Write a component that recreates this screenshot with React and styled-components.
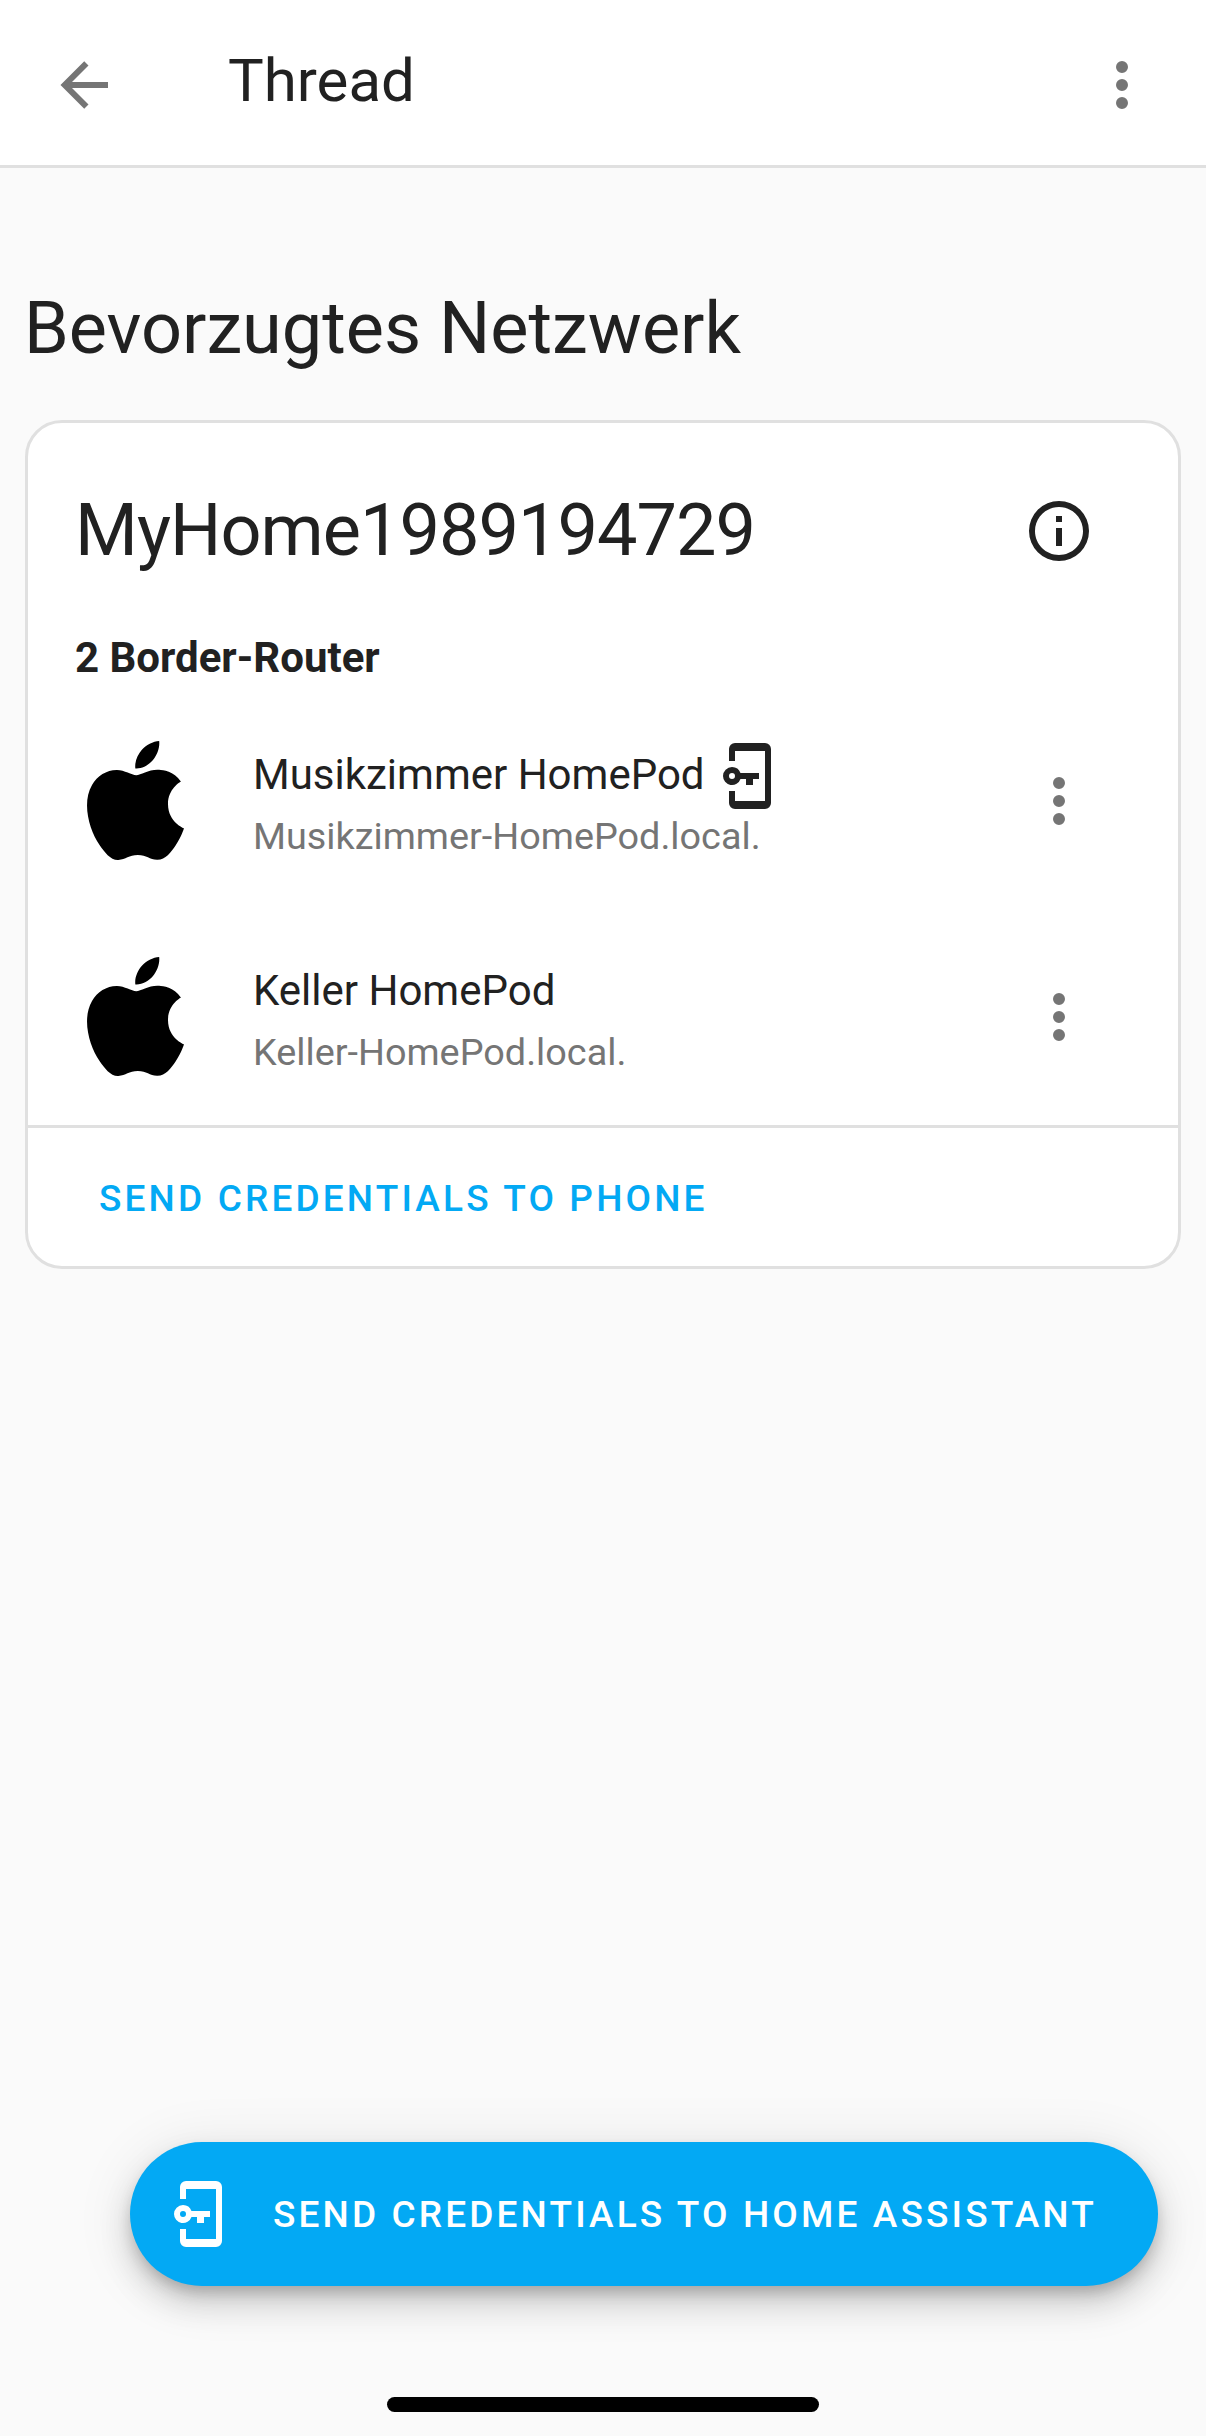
import styled, { createGlobalStyle } from 'styled-components';
import { SiApple } from 'react-icons/si';

const GlobalStyle = createGlobalStyle`
  html, body {
    margin: 0;
    padding: 0;
    background: #fafafa;
  }
  * {
    box-sizing: border-box;
  }
`;

const ARROW_LEFT = 'M20,11V13H8L13.5,18.5L12.08,19.92L4.16,12L12.08,4.08L13.5,5.5L8,11H20Z';
const DOTS_VERTICAL = 'M12,16A2,2 0 0,1 14,18A2,2 0 0,1 12,20A2,2 0 0,1 10,18A2,2 0 0,1 12,16M12,10A2,2 0 0,1 14,12A2,2 0 0,1 12,14A2,2 0 0,1 10,12A2,2 0 0,1 12,10M12,4A2,2 0 0,1 14,6A2,2 0 0,1 12,8A2,2 0 0,1 10,6A2,2 0 0,1 12,4Z';
const INFO_OUTLINE = 'M11,9H13V7H11M12,20C7.59,20 4,16.41 4,12C4,7.59 7.59,4 12,4C16.41,4 20,7.59 20,12C20,16.41 16.41,20 12,20M12,2A10,10 0 0,0 2,12A10,10 0 0,0 12,22A10,10 0 0,0 22,12A10,10 0 0,0 12,2M11,17H13V11H11V17Z';

function MdiIcon({ path, color = '#757575' }) {
  return (
    <svg width="72" height="72" viewBox="0 0 24 24" fill={color}>
      <path d={path} />
    </svg>
  );
}

function PhoneKeyIcon({ color }) {
  return (
    <svg width="48" height="66" viewBox="0 0 48 66" fill={color}>
      <path d="M12,18V8H42V58H12V48H6V60A6,6 0 0,0 12,66H42A6,6 0 0,0 48,60V6A6,6 0 0,0 42,0H12A6,6 0 0,0 6,6V18Z" />
      <path
        fillRule="evenodd"
        d="M9,24A9,9 0 0,1 17.5,30H36V36H30V42H23V36H17.5A9,9 0 0,1 0,33A9,9 0 0,1 9,24ZM9,30A3,3 0 0,0 9,36A3,3 0 0,0 9,30Z"
      />
    </svg>
  );
}

function BorderRouter({ name, host, hasCredentials }) {
  return (
    <RouterRow>
      <LogoSlot>
        <SiApple size={119} color="#000" />
      </LogoSlot>
      <RouterText>
        <RouterName>
          {name}
          {hasCredentials && (
            <NameIcon>
              <PhoneKeyIcon color="#212121" />
            </NameIcon>
          )}
        </RouterName>
        <RouterHost>{host}</RouterHost>
      </RouterText>
      <RowMenu>
        <MdiIcon path={DOTS_VERTICAL} />
      </RowMenu>
    </RouterRow>
  );
}

export default function App() {
  return (
    <Page>
      <GlobalStyle />
      <TopBar>
        <BackSlot>
          <MdiIcon path={ARROW_LEFT} />
        </BackSlot>
        <BarTitle>Thread</BarTitle>
        <BarMenu>
          <MdiIcon path={DOTS_VERTICAL} />
        </BarMenu>
      </TopBar>

      <Content>
        <Heading>Bevorzugtes Netzwerk</Heading>
        <Card>
          <CardTitleRow>
            <CardTitle>MyHome1989194729</CardTitle>
            <RowMenu>
              <MdiIcon path={INFO_OUTLINE} color="#212121" />
            </RowMenu>
          </CardTitleRow>
          <SectionLabel>2 Border-Router</SectionLabel>
          <BorderRouter name="Musikzimmer HomePod" host="Musikzimmer-HomePod.local." hasCredentials />
          <BorderRouter name="Keller HomePod" host="Keller-HomePod.local." />
          <CardActions>
            <TextButton>SEND CREDENTIALS TO PHONE</TextButton>
          </CardActions>
        </Card>
      </Content>

      <Fab>
        <FabIcon>
          <PhoneKeyIcon color="#fff" />
        </FabIcon>
        <FabLabel>SEND CREDENTIALS TO HOME ASSISTANT</FabLabel>
      </Fab>
      <HomeIndicator />
    </Page>
  );
}

const Page = styled.div`
  position: relative;
  width: 1206px;
  height: 2436px;
  overflow: hidden;
  background: #fafafa;
  font-family: Roboto, 'Liberation Sans', sans-serif;
  color: #212121;
`;

const TopBar = styled.header`
  display: flex;
  align-items: center;
  height: 168px;
  background: #fff;
  border-bottom: 3px solid #e0e0e0;
`;

const BackSlot = styled.div`
  display: flex;
  margin-left: 48px;
  margin-top: 4px;
`;

const BarTitle = styled.div`
  margin-left: 108px;
  font-size: 60px;
  line-height: 1;
  margin-top: -3px;
`;

const BarMenu = styled.div`
  display: flex;
  margin-left: auto;
  margin-right: 48px;
  margin-top: 4px;
`;

const Content = styled.main`
  padding: 0 25px;
`;

const Heading = styled.h1`
  margin: 0 0 0 -1px;
  padding: 118px 0 0;
  height: 252px;
  font-size: 72px;
  line-height: 86px;
  font-weight: 400;
`;

const Card = styled.section`
  width: 1156px;
  height: 849px;
  background: #fff;
  border: 3px solid #e0e0e0;
  border-radius: 37px;
`;

const CardTitleRow = styled.div`
  display: flex;
  align-items: center;
  height: 216px;
  padding-left: 47px;
`;

const CardTitle = styled.div`
  font-size: 72px;
  line-height: 86px;
  letter-spacing: -0.95px;
`;

const RowMenu = styled.div`
  display: flex;
  margin-left: auto;
  margin-right: 83px;
`;

const SectionLabel = styled.div`
  height: 54px;
  padding: 1px 0 0 47px;
  font-size: 42px;
  line-height: 36px;
  font-weight: 700;
`;

const RouterRow = styled.div`
  display: flex;
  align-items: center;
  height: 216px;
`;

const LogoSlot = styled.div`
  display: flex;
  justify-content: center;
  flex: none;
  width: 119px;
  margin-left: 48px;
  margin-top: -2px;
`;

const RouterText = styled.div`
  display: flex;
  flex-direction: column;
  margin-left: 58px;
  padding-top: 3px;
`;

const RouterName = styled.div`
  display: flex;
  align-items: center;
  height: 66px;
  font-size: 42px;
  margin-top: -6px;
`;

const NameIcon = styled.span`
  display: flex;
  margin-left: 18px;
  margin-top: 3px;
`;

const RouterHost = styled.div`
  font-size: 37.8px;
  line-height: 44px;
  color: #757575;
  margin-top: 6px;
`;

const CardActions = styled.div`
  display: flex;
  align-items: center;
  height: 140px;
  padding: 4px 0 0 71px;
  border-top: 3px solid #e0e0e0;
`;

const TextButton = styled.div`
  font-size: 37px;
  font-weight: 500;
  letter-spacing: 3.15px;
  color: #03a9f4;
`;

const Fab = styled.div`
  position: absolute;
  left: 130px;
  top: 2142px;
  display: flex;
  align-items: center;
  width: 1028px;
  height: 144px;
  border-radius: 72px;
  background: #03a9f4;
  color: #fff;
  box-shadow: 0 9px 15px -3px rgba(0, 0, 0, 0.22), 0 18px 30px 3px rgba(0, 0, 0, 0.12), 0 6px 54px 6px rgba(0, 0, 0, 0.08);
`;

const FabIcon = styled.span`
  display: flex;
  margin-left: 44px;
`;

const FabLabel = styled.span`
  margin-left: 51px;
  font-size: 37px;
  font-weight: 500;
  letter-spacing: 3.13px;
  white-space: nowrap;
`;

const HomeIndicator = styled.div`
  position: absolute;
  left: 387px;
  top: 2397px;
  width: 432px;
  height: 15px;
  border-radius: 8px;
  background: #000;
`;
